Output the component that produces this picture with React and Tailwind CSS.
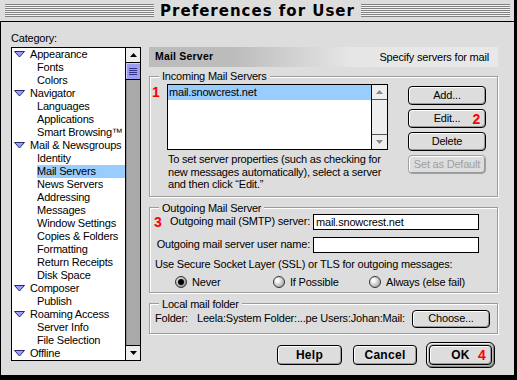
import React from "react";

const categories = [
  ["Appearance", 0],
  ["Fonts", 1],
  ["Colors", 1],
  ["Navigator", 0],
  ["Languages", 1],
  ["Applications", 1],
  ["Smart Browsing™", 1],
  ["Mail & Newsgroups", 0],
  ["Identity", 1],
  ["Mail Servers", 1, true],
  ["News Servers", 1],
  ["Addressing", 1],
  ["Messages", 1],
  ["Window Settings", 1],
  ["Copies & Folders", 1],
  ["Formatting", 1],
  ["Return Receipts", 1],
  ["Disk Space", 1],
  ["Composer", 0],
  ["Publish", 1],
  ["Roaming Access", 0],
  ["Server Info", 1],
  ["File Selection", 1],
  ["Offline", 0],
];

const Disclosure = () => (
  <svg width="11" height="7" viewBox="0 0 11 7" className="shrink-0">
    <polygon points="0.5,0.5 10.5,0.5 5.5,6" fill="#9c9cff" stroke="#2a2a6a" strokeWidth="1" />
  </svg>
);

const Arrow = ({ up, color = "#000" }) => (
  <svg width="7" height="4" viewBox="0 0 7 4">
    <polygon points={up ? "0,4 7,4 3.5,0" : "0,0 7,0 3.5,4"} fill={color} />
  </svg>
);

const Btn = ({ children, className = "", disabled, note }) => (
  <div
    className={`relative flex items-center justify-center rounded-[4px] border bg-[#dddddd] shadow-[inset_1px_1px_0_#ffffff,inset_-1px_-1px_0_#999999] ${
      disabled ? "border-[#a0a0a0] text-[#a0a0a0]" : "border-black text-black"
    } ${className}`}
  >
    {children}
    {note && (
      <span className="absolute right-[5px] top-[1px] text-[14px] leading-[16px] font-bold text-[#ff0000]">{note}</span>
    )}
  </div>
);

const Radio = ({ on, label, className = "" }) => (
  <div className={`flex items-center gap-[5px] ${className}`}>
    <div
      className={`w-[12px] h-[12px] rounded-full border border-[#333333] flex items-center justify-center ${
        on
          ? "bg-[radial-gradient(circle_at_35%_35%,#eeeeee,#777777)]"
          : "bg-[radial-gradient(circle_at_35%_35%,#ffffff_10%,#999999_90%)]"
      }`}
    >
      {on && <div className="w-[6px] h-[6px] rounded-full bg-black" />}
    </div>
    <span>{label}</span>
  </div>
);

const Group = ({ title, className = "", children }) => (
  <fieldset
    className={`min-w-0 border border-[#9c9c9c] shadow-[inset_1px_1px_0_#ffffff,1px_1px_0_#ffffff] ${className}`}
  >
    <legend className="ml-[9px] px-[3px] leading-[12px] bg-[#dddddd]">{title}</legend>
    {children}
  </fieldset>
);

export default function App() {
  return (
    <div className="w-[517px] h-[380px] bg-black overflow-hidden font-['Liberation_Sans',Arial,sans-serif] text-[11px] tracking-[-0.2px] text-black">
      <div className="w-[514px] h-[375px] bg-[#dddddd] flex flex-col">
        {/* title bar */}
        <div className="h-[22px] shrink-0 flex items-center pl-[5px] pr-[4px] gap-[6px] border-b border-black">
          <div className="flex-1 h-[13px] bg-[repeating-linear-gradient(to_bottom,#808080_0px,#808080_1px,#f4f4f4_1px,#f4f4f4_2px)]" />
          <div className="font-['DejaVu_Sans',sans-serif] font-bold text-[15px] tracking-[1px] leading-[18px]">
            Preferences for User
          </div>
          <div className="flex-1 h-[13px] bg-[repeating-linear-gradient(to_bottom,#808080_0px,#808080_1px,#f4f4f4_1px,#f4f4f4_2px)]" />
        </div>

        <div className="flex-1 border-l border-black pl-[10px] pt-[10px] flex flex-col">
          <div className="h-[13px] leading-[13px]">Category:</div>
          <div className="mt-[2px] flex gap-[8px]">
            {/* category list */}
            <div className="w-[130px] h-[314px] border border-black flex shrink-0">
              <div className="flex-1 bg-white">
                {categories.map(([name, sub, sel]) =>
                  sub ? (
                    <div key={name} className="h-[13px] flex pl-[25px]">
                      <span className={`flex-1 leading-[13px] whitespace-nowrap ${sel ? "bg-[#99ccff]" : ""}`}>{name}</span>
                    </div>
                  ) : (
                    <div key={name} className="h-[13px] flex items-center pl-[2px] gap-[5px]">
                      <Disclosure />
                      <span className="leading-[13px] whitespace-nowrap">{name}</span>
                    </div>
                  )
                )}
              </div>
              <div className="w-[15px] border-l border-black flex flex-col">
                <div className="h-[15px] bg-[#eeeeee] border-b border-black flex items-center justify-center">
                  <Arrow up />
                </div>
                <div className="h-[17px] bg-[#9c9cf0] border-b border-black flex flex-col items-center justify-center gap-[1px] shadow-[inset_1px_1px_0_#ccccff]">
                  <div className="w-[8px] h-[1px] bg-[#33338a]" />
                  <div className="w-[8px] h-[1px] bg-[#33338a]" />
                  <div className="w-[8px] h-[1px] bg-[#33338a]" />
                  <div className="w-[8px] h-[1px] bg-[#33338a]" />
                </div>
                <div className="flex-1 bg-[#aaaaaa] shadow-[inset_1px_0_0_#888888]" />
                <div className="h-[15px] bg-[#eeeeee] border-t border-black flex items-center justify-center">
                  <Arrow />
                </div>
              </div>
            </div>

            {/* right panel */}
            <div className="w-[349px] flex flex-col">
              <div className="h-[20px] flex items-center justify-between pl-[6px] pr-[9px] bg-[linear-gradient(to_right,#bcbcbc_0%,#bcbcbc_24%,#e6e6e6_58%,#e8e8e8_100%)]">
                <span className="font-bold text-[10.5px] tracking-[0.2px]">Mail Server</span>
                <span>Specify servers for mail</span>
              </div>

              <Group title="Incoming Mail Servers" className="mt-[3px]">
                <div className="flex pt-[2px] pb-[5px]">
                  <div className="w-[17px] pl-[2px] text-[14px] leading-[16px] font-bold text-[#ff0000]">1</div>
                  <div className="w-[221px]">
                    <div className="h-[66px] border border-black bg-white flex">
                      <div className="flex-1">
                        <div className="h-[15px] leading-[15px] pl-[1px] bg-[#99ccff]">mail.snowcrest.net</div>
                      </div>
                      <div className="w-[16px] border-l border-black bg-[#eeeeee] flex flex-col">
                        <div className="h-[15px] border-b border-[#555555] flex items-center justify-center">
                          <Arrow up color="#888888" />
                        </div>
                        <div className="flex-1" />
                        <div className="h-[15px] border-t border-[#555555] flex items-center justify-center">
                          <Arrow color="#888888" />
                        </div>
                      </div>
                    </div>
                    <p className="mt-[3px] pl-[1px] leading-[12.5px] whitespace-nowrap">
                      To set server properties (such as checking for
                      <br />
                      new messages automatically), select a server
                      <br />
                      and then click “Edit.”
                    </p>
                  </div>
                  <div className="ml-[20px] w-[78px] flex flex-col gap-[4px] pt-[2px]">
                    <Btn className="h-[19px]">Add...</Btn>
                    <Btn className="h-[19px]" note="2">Edit...</Btn>
                    <Btn className="h-[19px]">Delete</Btn>
                    <Btn className="h-[19px]" disabled>Set as Default</Btn>
                  </div>
                </div>
              </Group>

              <Group title="Outgoing Mail Server" className="mt-[5px]">
                <div className="flex flex-col pb-[3px]">
                  <div className="h-[16px] flex items-center">
                    <div className="w-[160px] flex items-center justify-between">
                      <span className="pl-[4px] text-[14px] leading-[16px] font-bold text-[#ff0000]">3</span>
                      <span className="whitespace-nowrap">Outgoing mail (SMTP) server:</span>
                    </div>
                    <div className="ml-[3px] w-[166px] h-[16px] border border-black bg-white pl-[2px] leading-[14px]">
                      mail.snowcrest.net
                    </div>
                  </div>
                  <div className="mt-[7px] h-[16px] flex items-center">
                    <div className="w-[160px] text-right whitespace-nowrap">Outgoing mail server user name:</div>
                    <div className="ml-[3px] w-[166px] h-[16px] border border-black bg-white" />
                  </div>
                  <div className="mt-[5px] pl-[5px] leading-[13px] whitespace-nowrap">
                    Use Secure Socket Layer (SSL) or TLS for outgoing messages:
                  </div>
                  <div className="mt-[5px] h-[13px] flex items-center pl-[25px]">
                    <Radio on label="Never" className="w-[98px]" />
                    <Radio label="If Possible" className="w-[96px]" />
                    <Radio label="Always (else fail)" />
                  </div>
                </div>
              </Group>

              <Group title="Local mail folder" className="mt-[5px]">
                <div className="h-[18px] flex items-center pl-[5px] pr-[7px] mb-[5px]">
                  <span className="w-[42px]">Folder:</span>
                  <span className="whitespace-nowrap">Leela:System Folder:...pe Users:Johan:Mail:</span>
                  <Btn className="ml-auto w-[78px] h-[18px]">Choose...</Btn>
                </div>
              </Group>

              <div className="mt-[8px] flex items-center justify-end pr-[3px]">
                <Btn className="w-[65px] h-[20px] font-bold text-[12px] tracking-[0.3px]">Help</Btn>
                <Btn className="ml-[11px] w-[64px] h-[20px] font-bold text-[12px] tracking-[0.3px]">Cancel</Btn>
                <div className="ml-[9px] w-[69px] h-[26px] rounded-[6px] border border-black bg-[#bbbbbb] p-[2px] shadow-[inset_1px_1px_0_#eeeeee,inset_-1px_-1px_0_#888888]">
                  <Btn className="w-full h-full font-bold text-[12px] tracking-[0.3px]" note="4">OK</Btn>
                </div>
              </div>
            </div>
          </div>
        </div>
      </div>
    </div>
  );
}
